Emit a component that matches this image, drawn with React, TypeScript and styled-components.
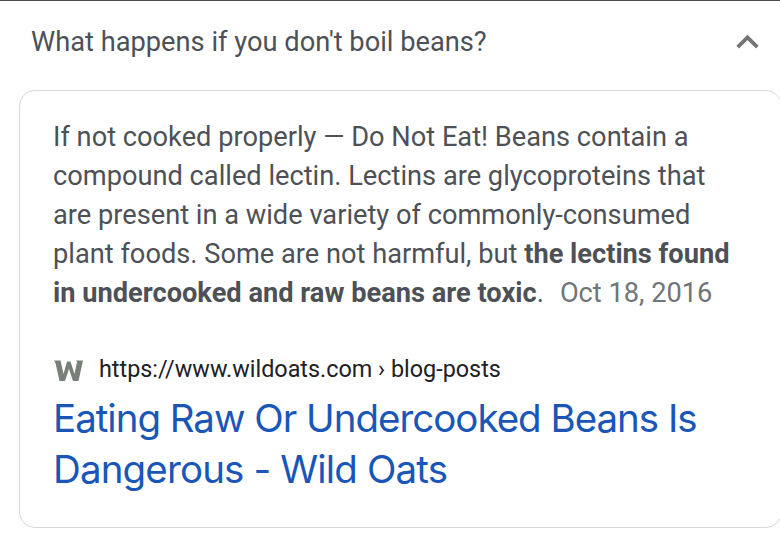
import React from "react";
import styled, { createGlobalStyle } from "styled-components";

const GlobalStyle = createGlobalStyle`
  * { box-sizing: border-box; }
  html, body { margin: 0; background: #fff; }
  body { overflow: hidden; }
`;

const Page = styled.main`
  width: 780px;
  height: 556px;
  overflow: hidden;
  background: #fff;
  border-top: 1px solid #4c4c4e;
  font-family: Roboto, sans-serif;
`;

const Question = styled.header`
  display: flex;
  align-items: center;
  justify-content: space-between;
  height: 89px;
  padding: 0 20px 8px 31px;
`;

const QuestionText = styled.h2`
  margin: 0;
  color: #4d5156;
  font-size: 27.25px;
  font-weight: 400;
  line-height: 36px;
  white-space: nowrap;
`;

const Chevron = styled.svg`
  width: 25px;
  height: 16px;
  margin-top: 1px;
`;

const Card = styled.section`
  width: 763px;
  height: 438px;
  margin-left: 19px;
  padding: 27px 0 0 33px;
  border: 1px solid #d6d8da;
  border-radius: 16px;
`;

const Answer = styled.p`
  margin: 0;
  color: #4d5156;
  font-size: 27.22px;
`;

const Line = styled.span`
  display: block;
  height: 39px;
  line-height: 39px;
  white-space: pre;
`;

const PublishedDate = styled.span`
  margin-left: 16px;
  color: #70757a;
`;

const Source = styled.div`
  display: flex;
  align-items: center;
  height: 30px;
  margin-top: 41px;
  color: #202124;
  font-size: 23.38px;
  white-space: nowrap;
`;

const SiteIcon = styled.svg`
  width: 32px;
  height: 24px;
  margin: 3px 14px 0 0;
  filter: blur(0.7px);
`;

const Title = styled.h3`
  margin: 9px 0 0;
  color: #1a56b8;
  font-family: Inter, sans-serif;
  font-size: 38.5px;
  font-weight: 400;
`;

const TitleLine = styled.span<{ $spacing: number }>`
  display: block;
  height: 51px;
  line-height: 51px;
  white-space: pre;
  letter-spacing: ${({ $spacing }) => $spacing}px;
`;

export default function App() {
  return (
    <>
      <GlobalStyle />
      <Page>
        <Question>
          <QuestionText>What happens if you don't boil beans?</QuestionText>
          <Chevron viewBox="0 0 25 16">
            <path d="M2.7 13.2 12.5 3.4 22.3 13.2" fill="none" stroke="#757575" strokeWidth="3.8" />
          </Chevron>
        </Question>
        <Card>
          <Answer>
            <Line>If not cooked properly — Do Not Eat! Beans contain a</Line>
            <Line>compound called lectin. Lectins are glycoproteins that</Line>
            <Line>are present in a wide variety of commonly-consumed</Line>
            <Line>plant foods. Some are not harmful, but <b>the lectins found</b></Line>
            <Line><b>in undercooked and raw beans are toxic</b>.<PublishedDate>Oct 18, 2016</PublishedDate></Line>
          </Answer>
          <Source>
            <SiteIcon viewBox="0 0 32 24">
              <path d="M1 1.5H7.5L10.5 15 14 2.5H17.5L21.5 15 24 3 23 1.5H30L25.5 22H20L16 10 12 22H6.5L2.5 4Z" fill="#77817a" />
            </SiteIcon>
            <span>https://www.wildoats.com › blog-posts</span>
          </Source>
          <Title>
            <TitleLine $spacing={-1.01}>Eating Raw Or Undercooked Beans Is</TitleLine>
            <TitleLine $spacing={-0.86}>Dangerous - Wild Oats</TitleLine>
          </Title>
        </Card>
      </Page>
    </>
  );
}
